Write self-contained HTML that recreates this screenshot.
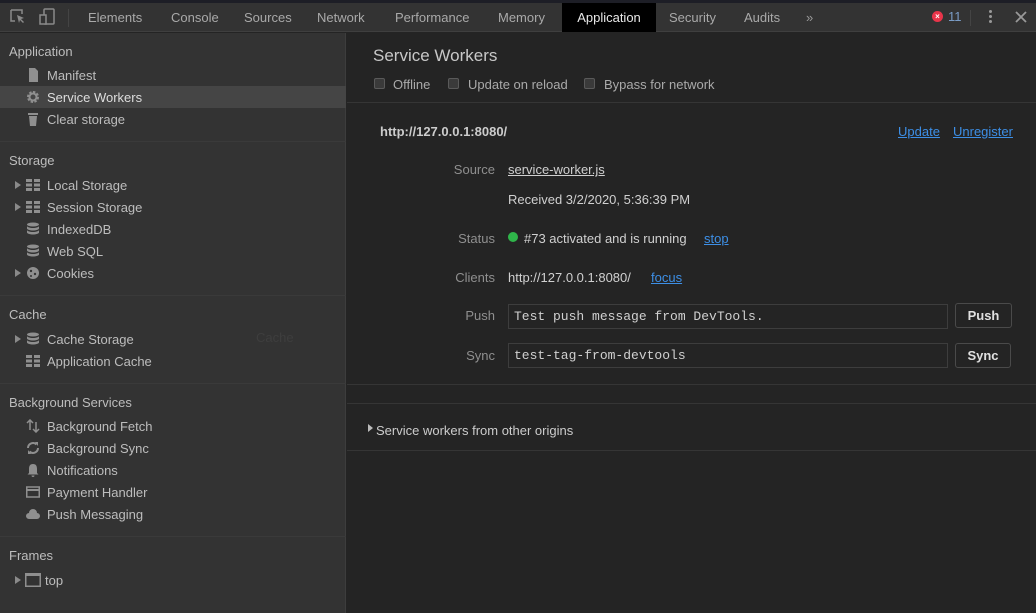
<!DOCTYPE html>
<html><head><meta charset="utf-8"><style>
*{margin:0;padding:0;box-sizing:border-box}
body{width:1036px;height:613px;overflow:hidden;background:#242424;font-family:"Liberation Sans",sans-serif;font-size:13px;color:#bdbdbd;position:relative}
.a{position:absolute;white-space:nowrap}
#top{position:absolute;left:0;top:0;width:1036px;height:3px;background:#1d1e26}
#tb{position:absolute;left:0;top:3px;width:1036px;height:29px;background:#333;border-bottom:1px solid #3f3f3f}
.tab{position:absolute;top:3px;height:29px;line-height:29px;color:#a9a9a9;font-size:13px}
#side{position:absolute;left:0;top:33px;width:346px;height:580px;background:#333;border-right:1px solid #3d3d3d}
.hd{position:absolute;left:9px;color:#bdbdbd;font-size:13px}
.it{position:absolute;left:47px;color:#bdbdbd;font-size:13px}
.ic{position:absolute;left:26px;width:14px;height:14px}
.tri{position:absolute;left:15px;width:0;height:0;border-left:6px solid #8a8a8a;border-top:4px solid transparent;border-bottom:4px solid transparent}
.sep{position:absolute;left:0;width:346px;height:1px;background:#3a3a3a}
.lbl{position:absolute;color:#8f8f8f;text-align:right;width:120px;left:375px}
.v{position:absolute;left:508px;color:#d0d0d0}
a{color:#3d8fe6;text-decoration:underline}
.cb{position:absolute;width:11px;height:11px;border:1px solid #5a5a5a;border-radius:2px;background:#3a3a3a;top:78px}
.inp{position:absolute;left:508px;width:440px;height:25px;border:1px solid #3d3d3d;background:#242424;font-family:"Liberation Mono",monospace;font-size:13px;color:#d0d0d0;padding-left:5px;line-height:23px}
.btn{position:absolute;height:25px;border:1px solid #4a4a4a;border-radius:3px;background:#242424;color:#e0e0e0;font-weight:bold;text-align:center;line-height:23px}
.hl{position:absolute;left:347px;width:689px;height:1px;background:#353535}
</style></head><body>
<div id="top"></div>
<div id="tb"></div>
<svg class="a" style="left:10px;top:9px" width="16" height="16" viewBox="0 0 16 16"><path d="M1 1h11v4M1 1v11h4" stroke="#8a8a8a" stroke-width="1.5" fill="none"/><path d="M7 6l7 3-3 1 3 3-1 1-3-3-1 3z" fill="#8a8a8a"/></svg>
<svg class="a" style="left:38px;top:8px" width="18" height="18" viewBox="0 0 18 18"><rect x="6" y="1" width="10" height="15" rx="1" stroke="#8a8a8a" stroke-width="1.5" fill="none"/><rect x="2" y="7" width="6" height="9" stroke="#8a8a8a" stroke-width="1.5" fill="#333"/></svg>
<div class="a" style="left:68px;top:9px;width:1px;height:18px;background:#444"></div>
<div class="tab" style="left:88px">Elements</div>
<div class="tab" style="left:171px">Console</div>
<div class="tab" style="left:244px">Sources</div>
<div class="tab" style="left:317px">Network</div>
<div class="tab" style="left:395px">Performance</div>
<div class="tab" style="left:498px">Memory</div>
<div class="tab" style="left:562px;width:94px;background:#000;color:#e8e8e8;text-align:center">Application</div>
<div class="tab" style="left:669px">Security</div>
<div class="tab" style="left:744px">Audits</div>
<div class="tab" style="left:806px;color:#999">»</div>
<div class="a" style="left:932px;top:11px;width:11px;height:11px;border-radius:50%;background:#e8354a;color:#fff;font-size:8px;line-height:11px;text-align:center;font-weight:bold">×</div>
<div class="a" style="left:948px;top:9px;color:#7a9cc6;font-size:13px">11</div>
<div class="a" style="left:970px;top:10px;width:1px;height:16px;background:#444"></div>
<div class="a" style="left:989px;top:10px;width:3px;height:3px;background:#999;border-radius:50%;box-shadow:0 5px 0 #999,0 10px 0 #999"></div>
<svg class="a" style="left:1015px;top:11px" width="12" height="12" viewBox="0 0 12 12"><path d="M1 1l10 10M11 1L1 11" stroke="#999" stroke-width="1.8"/></svg>

<div id="side"></div>
<div class="hd" style="top:44px">Application</div>
<svg class="ic" style="top:68px" viewBox="0 0 14 14"><path d="M3 0h6l3 3v11H3z" fill="#8f8f8f"/></svg>
<div class="it" style="top:68px">Manifest</div>
<div class="a" style="left:0;top:86px;width:346px;height:22px;background:#454545"></div>
<svg class="ic" style="top:90px" viewBox="0 0 14 14"><circle cx="7" cy="7" r="4.5" fill="none" stroke="#8f8f8f" stroke-width="3" stroke-dasharray="2.2 1.3"/><circle cx="7" cy="7" r="3.5" fill="none" stroke="#8f8f8f" stroke-width="2"/></svg>
<div class="it" style="top:90px;color:#ddd">Service Workers</div>
<svg class="ic" style="top:112px" viewBox="0 0 14 14"><rect x="2" y="1" width="10" height="2" fill="#8f8f8f"/><path d="M3 4h8l-1 10H4z" fill="#8f8f8f"/></svg>
<div class="it" style="top:112px">Clear storage</div>
<div class="sep" style="top:141px"></div>
<div class="hd" style="top:153px">Storage</div>
<div class="tri" style="top:181px"></div><svg class="ic" style="top:178px" viewBox="0 0 14 14"><path d="M0 1h6v3H0zM8 1h6v3H8zM0 5.5h6v3H0zM8 5.5h6v3H8zM0 10h6v3H0zM8 10h6v3H8z" fill="#8f8f8f"/></svg><div class="it" style="top:178px">Local Storage</div>
<div class="tri" style="top:203px"></div><svg class="ic" style="top:200px" viewBox="0 0 14 14"><path d="M0 1h6v3H0zM8 1h6v3H8zM0 5.5h6v3H0zM8 5.5h6v3H8zM0 10h6v3H0zM8 10h6v3H8z" fill="#8f8f8f"/></svg><div class="it" style="top:200px">Session Storage</div>
<svg class="ic" style="top:222px" viewBox="0 0 14 14"><ellipse cx="7" cy="2.5" rx="6" ry="2" fill="#8f8f8f"/><path d="M1 4v2.5c0 1 3 2 6 2s6-1 6-2V4c0 1-3 2-6 2S1 5 1 4zM1 8v2.5c0 1 3 2 6 2s6-1 6-2V8c0 1-3 2-6 2S1 9 1 8z" fill="#8f8f8f"/></svg><div class="it" style="top:222px">IndexedDB</div>
<svg class="ic" style="top:244px" viewBox="0 0 14 14"><ellipse cx="7" cy="2.5" rx="6" ry="2" fill="#8f8f8f"/><path d="M1 4v2.5c0 1 3 2 6 2s6-1 6-2V4c0 1-3 2-6 2S1 5 1 4zM1 8v2.5c0 1 3 2 6 2s6-1 6-2V8c0 1-3 2-6 2S1 9 1 8z" fill="#8f8f8f"/></svg><div class="it" style="top:244px">Web SQL</div>
<div class="tri" style="top:269px"></div><svg class="ic" style="top:266px" viewBox="0 0 14 14"><circle cx="7" cy="7" r="6" fill="#8f8f8f"/><circle cx="5" cy="5" r="1.2" fill="#333"/><circle cx="9" cy="8" r="1.2" fill="#333"/><circle cx="5" cy="10" r="1" fill="#333"/></svg><div class="it" style="top:266px">Cookies</div>
<div class="sep" style="top:295px"></div>
<div class="hd" style="top:307px">Cache</div>
<div class="tri" style="top:335px"></div><svg class="ic" style="top:332px" viewBox="0 0 14 14"><ellipse cx="7" cy="2.5" rx="6" ry="2" fill="#8f8f8f"/><path d="M1 4v2.5c0 1 3 2 6 2s6-1 6-2V4c0 1-3 2-6 2S1 5 1 4zM1 8v2.5c0 1 3 2 6 2s6-1 6-2V8c0 1-3 2-6 2S1 9 1 8z" fill="#8f8f8f"/></svg><div class="it" style="top:332px">Cache Storage</div>
<div class="a" style="left:256px;top:330px;color:#3e3e3e">Cache</div>
<svg class="ic" style="top:354px" viewBox="0 0 14 14"><path d="M0 1h6v3H0zM8 1h6v3H8zM0 5.5h6v3H0zM8 5.5h6v3H8zM0 10h6v3H0zM8 10h6v3H8z" fill="#8f8f8f"/></svg><div class="it" style="top:354px">Application Cache</div>
<div class="sep" style="top:383px"></div>
<div class="hd" style="top:395px">Background Services</div>
<svg class="ic" style="top:419px" viewBox="0 0 14 14"><path d="M4 1v10M1 4l3-3 3 3M10 3v10M7 10l3 3 3-3" stroke="#8f8f8f" stroke-width="1.5" fill="none"/></svg><div class="it" style="top:419px">Background Fetch</div>
<svg class="ic" style="top:441px" viewBox="0 0 14 14"><path d="M2 7a5 5 0 0 1 8.5-3.5M12 7a5 5 0 0 1-8.5 3.5" stroke="#8f8f8f" stroke-width="2" fill="none"/><path d="M9 1l3 0 0 4zM5 13l-3 0 0-4z" fill="#8f8f8f"/></svg><div class="it" style="top:441px">Background Sync</div>
<svg class="ic" style="top:463px" viewBox="0 0 14 14"><path d="M7 1c3 0 4 2 4 5v4l1.5 1.5H1.5L3 10V6c0-3 1-5 4-5zM5.5 12.5h3a1.5 1.5 0 0 1-3 0z" fill="#8f8f8f"/></svg><div class="it" style="top:463px">Notifications</div>
<svg class="ic" style="top:485px" viewBox="0 0 14 14"><rect x="0.75" y="2" width="12.5" height="10" stroke="#8f8f8f" stroke-width="1.5" fill="none"/><rect x="1" y="4" width="12" height="2" fill="#8f8f8f"/></svg><div class="it" style="top:485px">Payment Handler</div>
<svg class="ic" style="top:507px" viewBox="0 0 14 14"><path d="M3 12a3 3 0 0 1 0-6 4 4 0 0 1 8 0 3 3 0 0 1 0 6z" fill="#8f8f8f"/></svg><div class="it" style="top:507px">Push Messaging</div>
<div class="sep" style="top:536px"></div>
<div class="hd" style="top:548px">Frames</div>
<div class="tri" style="top:576px"></div><svg class="a" style="left:25px;top:573px" width="16" height="14" viewBox="0 0 16 14"><rect x="0.75" y="0.75" width="14.5" height="12.5" stroke="#8f8f8f" stroke-width="1.5" fill="none"/><rect x="1" y="1" width="14" height="2" fill="#8f8f8f"/></svg><div class="a" style="left:45px;top:573px;color:#bdbdbd">top</div>

<div class="a" style="left:373px;top:46px;font-size:17px;color:#c8c8c8">Service Workers</div>
<div class="cb" style="left:374px"></div><div class="a" style="left:393px;top:77px;color:#aaa">Offline</div>
<div class="cb" style="left:448px"></div><div class="a" style="left:468px;top:77px;color:#aaa">Update on reload</div>
<div class="cb" style="left:584px"></div><div class="a" style="left:604px;top:77px;color:#aaa">Bypass for network</div>
<div class="hl" style="top:102px"></div>
<div class="a" style="left:380px;top:124px;font-weight:bold;color:#ccc">http://127.0.0.1:8080/</div>
<div class="a" style="left:898px;top:124px"><a>Update</a></div>
<div class="a" style="left:953px;top:124px"><a>Unregister</a></div>
<div class="lbl" style="top:162px">Source</div><div class="v" style="top:162px"><a style="color:#d0d0d0">service-worker.js</a></div>
<div class="v" style="top:192px">Received 3/2/2020, 5:36:39 PM</div>
<div class="lbl" style="top:231px">Status</div>
<div class="a" style="left:508px;top:232px;width:10px;height:10px;border-radius:50%;background:#2fb54a"></div>
<div class="v" style="left:524px;top:231px">#73 activated and is running</div>
<div class="a" style="left:704px;top:231px"><a>stop</a></div>
<div class="lbl" style="top:270px">Clients</div><div class="v" style="top:270px">http://127.0.0.1:8080/</div>
<div class="a" style="left:651px;top:270px"><a>focus</a></div>
<div class="lbl" style="top:308px">Push</div>
<div class="inp" style="top:304px">Test push message from DevTools.</div>
<div class="btn" style="left:955px;top:303px;width:57px">Push</div>
<div class="lbl" style="top:348px">Sync</div>
<div class="inp" style="top:343px">test-tag-from-devtools</div>
<div class="btn" style="left:955px;top:343px;width:56px">Sync</div>
<div class="hl" style="top:384px"></div>
<div class="hl" style="top:403px"></div>
<div class="a" style="left:368px;top:424px;width:0;height:0;border-left:5px solid #bbb;border-top:4px solid transparent;border-bottom:4px solid transparent"></div>
<div class="a" style="left:376px;top:423px;color:#ccc">Service workers from other origins</div>
<div class="hl" style="top:450px"></div>
</body></html>
